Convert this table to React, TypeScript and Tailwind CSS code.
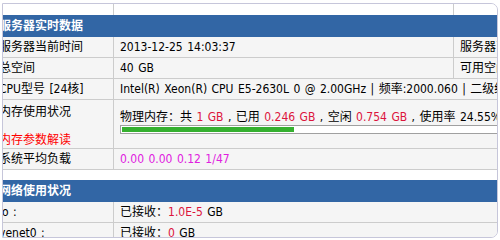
import React from 'react';

const red = 'text-[#dc143c]';

function Header({ title }: { title: string }) {
  return (
    <div className="h-[22px] bg-[#3266a5] pl-[5px] flex items-center text-white font-bold whitespace-nowrap">
      {title}
    </div>
  );
}

function InfoRow({ label, value, label2, value2 }: { label: string; value: React.ReactNode; label2: string; value2: string }) {
  return (
    <div className="flex h-[21px] bg-[#f5f5f5] border-b border-[#cccccc] whitespace-nowrap">
      <div className="w-[120px] shrink-0 border-r border-[#cccccc] pl-[5px] flex items-center">{label}</div>
      <div className="w-[340px] shrink-0 border-r border-[#cccccc] pl-[6px] flex items-center">{value}</div>
      <div className="w-[130px] shrink-0 border-r border-[#cccccc] pl-[6px] flex items-center">{label2}</div>
      <div className="pl-[6px] flex items-center">{value2}</div>
    </div>
  );
}

function WideRow({ label, children }: { label: string; children: React.ReactNode }) {
  return (
    <div className="flex h-[21px] bg-[#f5f5f5] border-b border-[#cccccc] whitespace-nowrap">
      <div className="w-[120px] shrink-0 border-r border-[#cccccc] pl-[5px] flex items-center">{label}</div>
      <div className="pl-[6px] flex items-center">{children}</div>
    </div>
  );
}

export default function App() {
  const used = 24.55;
  return (
    <div className="w-[500px] h-[240px] bg-white pl-[2px] pt-[3px] font-['DejaVu_Sans_Condensed','Liberation_Sans','Noto_Sans_CJK_SC',sans-serif] text-[12px] leading-[14px] [word-spacing:1px] text-black">
      <div className="w-[496px] h-[235px] border border-[#c6c6da] rounded-r-[7px] overflow-hidden">
        <div className="ml-[-9px] w-[900px]">
          {/* tail of the previous table */}
          <div className="flex h-[11px] bg-white">
            <div className="w-[120px] shrink-0 border-r border-[#cccccc]" />
            <div className="w-[340px] shrink-0 border-r border-[#cccccc]" />
          </div>

          <Header title="服务器实时数据" />
          <InfoRow label="服务器当前时间" value="2013-12-25 14:03:37" label2="服务器已运行时间" value2="12天 3小时 26分钟 18秒" />
          <InfoRow label="总空间" value="40 GB" label2="可用空间" value2="35.712 GB" />
          <WideRow label="CPU型号 [24核]">
            Intel(R) Xeon(R) CPU E5-2630L 0 @ 2.00GHz | 频率:2000.060 | 二级缓存:15360 KB | Bogomips:4000.12 × 24
          </WideRow>

          {/* memory */}
          <div className="flex h-[49px] bg-[#f5f5f5] border-b border-[#cccccc] whitespace-nowrap">
            <div className="w-[120px] shrink-0 border-r border-[#cccccc] pl-[5px] pt-[5px] flex flex-col">
              <span>内存使用状况</span>
              <span className="h-[14px]" />
              <span className="text-[#ff0000]">内存参数解读</span>
            </div>
            <div className="pl-[6px] pt-[10px] flex flex-col gap-[1px]">
              <div>
                物理内存：共 <span className={red}>1 GB</span> , 已用 <span className={red}>0.246 GB</span> , 空闲{' '}
                <span className={red}>0.754 GB</span> , 使用率 24.55%
              </div>
              <div className="w-[704px] h-[9px] border border-[#a0a0a0] bg-white p-px">
                <div className="h-full bg-[#35b02f]" style={{ width: `${used}%` }} />
              </div>
            </div>
          </div>

          <WideRow label="系统平均负载">
            <span className="text-[#e020e0]">0.00 0.00 0.12 1/47</span>
          </WideRow>

          <div className="h-[10px] bg-white" />

          <Header title="网络使用状况" />
          <WideRow label="lo :">
            已接收：<span className={red}>1.0E-5</span>&nbsp;GB
          </WideRow>
          <WideRow label="venet0 :">
            已接收：<span className={red}>0</span>&nbsp;GB
          </WideRow>
        </div>
      </div>
    </div>
  );
}
